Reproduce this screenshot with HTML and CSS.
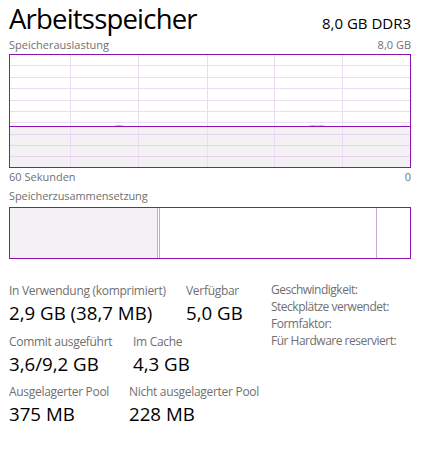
FILE: index.html
```html
<!DOCTYPE html>
<html lang="de">
<head>
<meta charset="utf-8">
<title>Arbeitsspeicher</title>
<link rel="stylesheet" href="styles.css">
</head>
<body>
<div class="page">
  <div class="header">
    <div class="title">Arbeitsspeicher</div>
    <div class="spec">8,0 GB DDR3</div>
  </div>
  <div class="caption-row top">
    <span>Speicherauslastung</span>
    <span>8,0 GB</span>
  </div>
  <svg class="graph" width="402" height="114" viewBox="0 0 402 114">
    <rect x="1" y="72.5" width="400" height="40.5" fill="#f3f1f4"/>
    <g stroke="#ecdcf2" stroke-width="1">
      <line x1="61.5" y1="1" x2="61.5" y2="113"/>
      <line x1="129.5" y1="1" x2="129.5" y2="113"/>
      <line x1="198.5" y1="1" x2="198.5" y2="113"/>
      <line x1="265.5" y1="1" x2="265.5" y2="113"/>
      <line x1="333.5" y1="1" x2="333.5" y2="113"/>
      <line x1="1" y1="11.5" x2="401" y2="11.5"/>
      <line x1="1" y1="23.5" x2="401" y2="23.5"/>
      <line x1="1" y1="34.5" x2="401" y2="34.5"/>
      <line x1="1" y1="46.5" x2="401" y2="46.5"/>
      <line x1="1" y1="57.5" x2="401" y2="57.5"/>
      <line x1="1" y1="68.5" x2="401" y2="68.5"/>
    </g>
    <g stroke="#e5d3ea" stroke-width="1">
      <line x1="1" y1="80.5" x2="401" y2="80.5"/>
      <line x1="1" y1="91.5" x2="401" y2="91.5"/>
      <line x1="1" y1="102.5" x2="401" y2="102.5"/>
    </g>
    <path d="M105 72.2 Q110 70.8 115 72.2 M300 72.2 Q304 71 308 72.2 Q312 71 316 72.2" fill="none" stroke="#c9a3d9" stroke-width="1"/>
    <line x1="1" y1="72.5" x2="401" y2="72.5" stroke="#8b12ae" stroke-width="1.2"/>
    <rect x="0.5" y="0.5" width="401" height="113" fill="none" stroke="#8b12ae" stroke-width="1"/>
  </svg>
  <div class="caption-row bottom">
    <span>60 Sekunden</span>
    <span>0</span>
  </div>
  <div class="caption-row comp-label">
    <span>Speicherzusammensetzung</span>
  </div>
  <div class="composition">
    <div class="seg seg-used"></div>
    <div class="seg seg-modified"></div>
    <div class="seg seg-standby"></div>
    <div class="seg seg-free"></div>
  </div>
  <div class="stats">
    <div class="stats-left">
      <div class="stat-row">
        <div class="stat w177">
          <div class="label">In Verwendung (komprimiert)</div>
          <div class="value">2,9 GB (38,7 MB)</div>
        </div>
        <div class="stat">
          <div class="label">Verfügbar</div>
          <div class="value">5,0 GB</div>
        </div>
      </div>
      <div class="stat-row">
        <div class="stat w124">
          <div class="label">Commit ausgeführt</div>
          <div class="value">3,6/9,2 GB</div>
        </div>
        <div class="stat">
          <div class="label">Im Cache</div>
          <div class="value">4,3 GB</div>
        </div>
      </div>
      <div class="stat-row">
        <div class="stat w120">
          <div class="label">Ausgelagerter Pool</div>
          <div class="value">375 MB</div>
        </div>
        <div class="stat">
          <div class="label">Nicht ausgelagerter Pool</div>
          <div class="value">228 MB</div>
        </div>
      </div>
    </div>
    <div class="stats-right">
      <div class="prop">Geschwindigkeit:</div>
      <div class="prop">Steckplätze verwendet:</div>
      <div class="prop">Formfaktor:</div>
      <div class="prop">Für Hardware reserviert:</div>
    </div>
  </div>
</div>
</body>
</html>
```

FILE: styles.css
```css
html, body {
  margin: 0;
  padding: 0;
  background: #ffffff;
}
body {
  font-family: "Open Sans", "Noto Sans", sans-serif;
  color: #000000;
}
.page {
  width: 402px;
  padding: 0 10px 0 9px;
}
.header {
  display: flex;
  justify-content: space-between;
  align-items: baseline;
  height: 38px;
}
.title {
  font-size: 27.5px;
  font-weight: 400;
  line-height: 38px;
  letter-spacing: -0.8px;
}
.spec {
  font-size: 15px;
  line-height: 20px;
}
.caption-row {
  display: flex;
  justify-content: space-between;
  font-size: 11px;
  line-height: 15px;
  color: #707070;
}
.caption-row.top {
  margin-top: -1px;
}
.graph {
  display: block;
  margin-top: 2px;
}
.caption-row.bottom {
  margin-top: 1px;
}
.caption-row.comp-label {
  margin-top: 4px;
  letter-spacing: -0.1px;
}
.composition {
  display: flex;
  margin-top: 4px;
  height: 50px;
  border: 1px solid #8b12ae;
}
.seg {
  height: 100%;
  border-right: 1px solid #c9a6d6;
}
.seg-used {
  width: 147px;
  background: #f3f1f4;
}
.seg-modified {
  width: 1px;
}
.seg-standby {
  width: 216px;
}
.seg-free {
  flex: 1;
  border-right: none;
}
.stats {
  display: flex;
  align-items: flex-start;
  margin-top: 24px;
}
.stats-left {
  width: 262px;
  display: flex;
  flex-direction: column;
  gap: 8.5px;
}
.stat-row {
  display: flex;
}
.stat {
  display: flex;
  flex-direction: column;
  gap: 2px;
  white-space: nowrap;
}
.w177 { width: 177px; }
.w124 { width: 124px; }
.w120 { width: 120px; }
.label {
  font-size: 12px;
  line-height: 16px;
  color: #707070;
  letter-spacing: -0.3px;
}
.value {
  font-size: 18.7px;
  line-height: 24px;
  color: #000000;
}
.stats-right {
  margin-top: -2px;
  font-size: 12px;
  line-height: 17px;
  color: #707070;
  letter-spacing: -0.5px;
}
.prop {
  white-space: nowrap;
}
```
